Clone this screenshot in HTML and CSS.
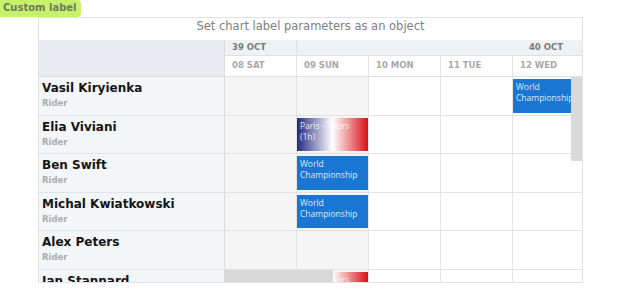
FILE: index.html
```html
<!DOCTYPE html>
<html>
<head>
<meta charset="utf-8">
<link rel="stylesheet" href="styles.css">
</head>
<body>
<div class="badge">Custom label</div>
<div class="chart">
  <div class="title">Set chart label parameters as an object</div>
  <div class="header">
    <div class="hleft"></div>
    <div class="htime">
      <div class="weeks">
        <div class="week w39">39 OCT</div>
        <div class="week w40">40 OCT</div>
      </div>
      <div class="days">
        <div class="day">08 SAT</div>
        <div class="day">09 SUN</div>
        <div class="day">10 MON</div>
        <div class="day">11 TUE</div>
        <div class="day">12 WED</div>
      </div>
    </div>
  </div>
  <div class="body">
    <div class="row">
      <div class="res"><div class="name">Vasil Kiryienka</div><div class="role">Rider</div></div>
      <div class="cell we"></div><div class="cell we"></div><div class="cell"></div><div class="cell"></div>
      <div class="cell"><div class="ev blue">World Championship</div></div>
    </div>
    <div class="row">
      <div class="res"><div class="name">Elia Viviani</div><div class="role">Rider</div></div>
      <div class="cell we"></div><div class="cell we"><div class="ev flag">Paris - Tours (1h)</div></div><div class="cell"></div><div class="cell"></div><div class="cell"></div>
    </div>
    <div class="row">
      <div class="res"><div class="name">Ben Swift</div><div class="role">Rider</div></div>
      <div class="cell we"></div><div class="cell we"><div class="ev blue">World Championship</div></div><div class="cell"></div><div class="cell"></div><div class="cell"></div>
    </div>
    <div class="row">
      <div class="res"><div class="name">Michal Kwiatkowski</div><div class="role">Rider</div></div>
      <div class="cell we"></div><div class="cell we"><div class="ev blue">World Championship</div></div><div class="cell"></div><div class="cell"></div><div class="cell"></div>
    </div>
    <div class="row">
      <div class="res"><div class="name">Alex Peters</div><div class="role">Rider</div></div>
      <div class="cell we"></div><div class="cell we"></div><div class="cell"></div><div class="cell"></div><div class="cell"></div>
    </div>
    <div class="row">
      <div class="res"><div class="name">Ian Stannard</div><div class="role">Rider</div></div>
      <div class="cell we"></div><div class="cell we"><div class="ev flag">Paris - Tours (1h)</div></div><div class="cell"></div><div class="cell"></div><div class="cell"></div>
    </div>
    <div class="vscroll"></div>
    <div class="hscroll"></div>
  </div>
</div>
</body>
</html>
```
FILE: styles.css
```css
* { box-sizing: border-box; }
body {
  margin: 0;
  font-family: "DejaVu Sans", sans-serif;
  background: #fff;
}
.badge {
  display: block;
  width: max-content;
  height: 17px;
  line-height: 16px;
  padding: 0 4px 0 3px;
  background: #c6f26a;
  color: #6e7a5f;
  font-size: 10px;
  font-weight: bold;
  border-radius: 0 4px 4px 0;
}
.chart {
  margin-left: 38px;
  width: 545px;
  height: 266px;
  border: 1px solid #e2e2e2;
  display: flex;
  flex-direction: column;
  overflow: hidden;
}
.title {
  height: 22px;
  line-height: 17px;
  text-align: center;
  color: #808080;
  font-size: 11.5px;
  flex: none;
}
.header {
  display: flex;
  height: 37px;
  flex: none;
  border-bottom: 1px solid #e0e0e0;
}
.hleft {
  width: 186px;
  flex: none;
  background: #e8ecf0;
  border-right: 1px solid #dcdcdc;
}
.htime {
  flex: 1;
  display: flex;
  flex-direction: column;
  min-width: 0;
}
.weeks {
  display: flex;
  height: 16px;
  background: #eef2f5;
  border-bottom: 1px solid #e0e0e0;
}
.week {
  font-size: 8.5px;
  font-weight: bold;
  color: #7a7a7a;
  line-height: 14px;
}
.w39 {
  width: 72px;
  padding-left: 7px;
  border-right: 1px solid #e0e0e0;
}
.w40 {
  flex: 1;
  text-align: right;
  padding-right: 19px;
}
.days {
  display: flex;
  flex: 1;
}
.day {
  width: 72px;
  flex: none;
  padding-left: 7px;
  font-size: 8.5px;
  font-weight: bold;
  color: #a8a8a8;
  line-height: 19px;
  border-right: 1px solid #e4e4e4;
}
.body {
  position: relative;
  flex: 1;
  overflow: hidden;
}
.row {
  display: flex;
  height: 38.6px;
  border-bottom: 1px solid #e2e2e2;
}
.res {
  width: 186px;
  flex: none;
  background: #f2f6f9;
  border-right: 1px solid #dcdcdc;
  padding: 3px 3px 2px;
}
.name {
  font-size: 12px;
  font-weight: bold;
  color: #141414;
  line-height: 16px;
}
.role {
  font-size: 8.5px;
  font-weight: bold;
  color: #acacac;
  line-height: 14px;
}
.cell {
  width: 72px;
  flex: none;
  border-right: 1px solid #e4e4e4;
  padding: 2px 0 2px 0;
  display: flex;
}
.cell.we { background: #f5f5f5; }
.ev {
  flex: 1;
  font-family: "Open Sans", sans-serif;
  font-size: 8.5px;
  line-height: 11px;
  color: rgba(255, 255, 255, 0.88);
  padding: 2px 3px;
  overflow: hidden;
}
.ev.blue { background: #1976d2; }
.ev.flag {
  background: linear-gradient(to right, #242a80 0%, #ffffff 50%, #da1016 100%);
}
.vscroll {
  position: absolute;
  right: 0;
  top: 0;
  width: 11px;
  height: 84px;
  background: #d9d9d9;
}
.hscroll {
  position: absolute;
  left: 186px;
  bottom: 0;
  width: 108px;
  height: 12px;
  background: #d9d9d9;
}
```
